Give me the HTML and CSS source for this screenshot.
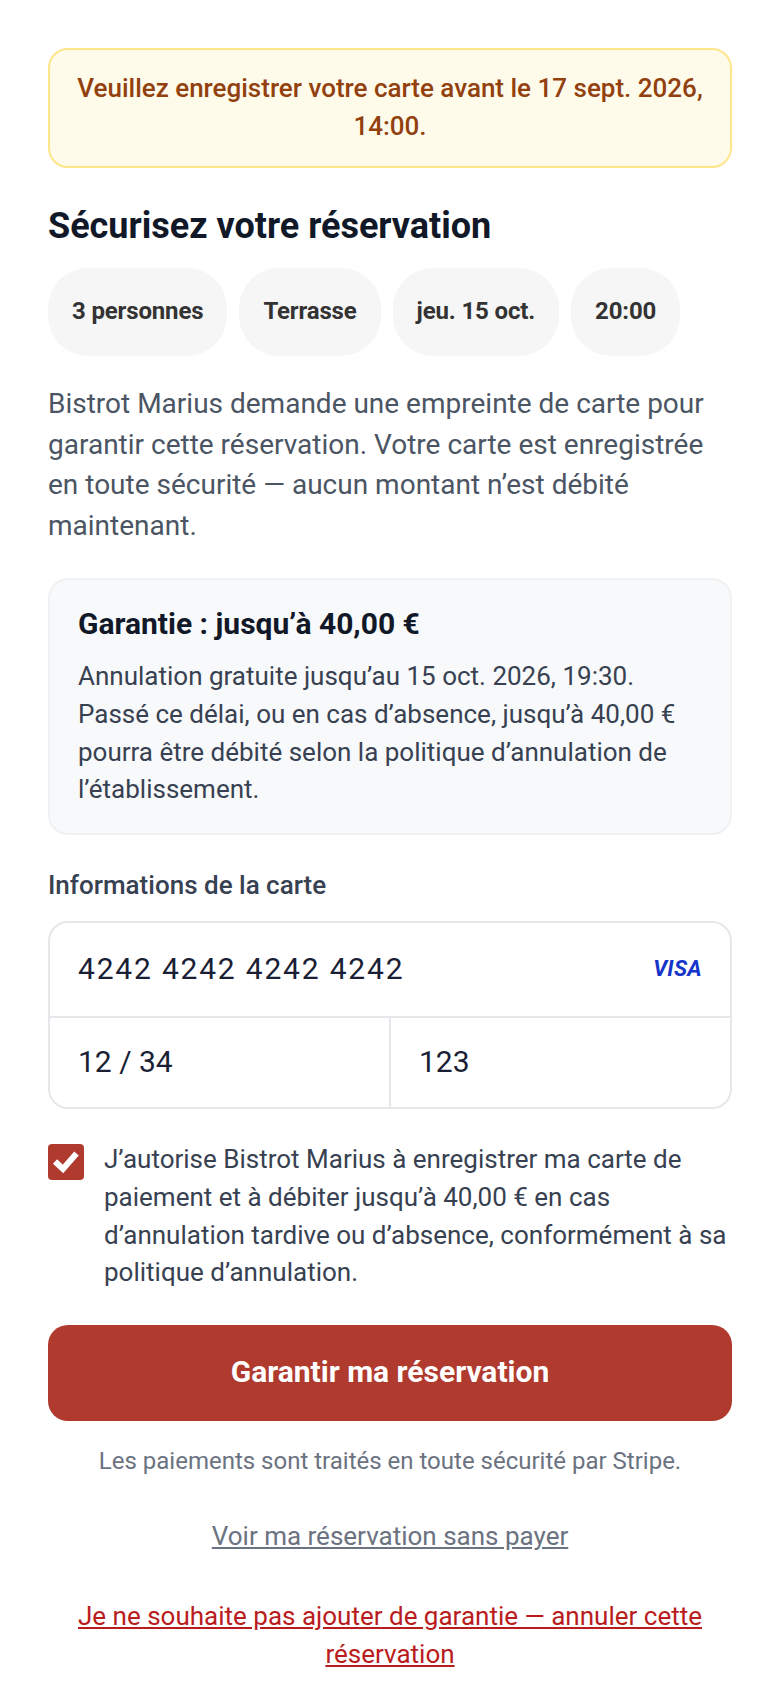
FILE: index.html
```html
<!DOCTYPE html>
<html lang="fr">
<head>
    <meta charset="UTF-8">
    <meta name="viewport" content="width=device-width, initial-scale=1.0">
    <title>Sécurisez votre réservation</title>
    <link rel="stylesheet" href="styles.css">
</head>
<body>
    <main class="page">
        <div class="notice">Veuillez enregistrer votre carte avant le 17 sept. 2026, 14:00.</div>

        <h1 class="title">Sécurisez votre réservation</h1>
        <ul class="pills">
            <li class="pill">3 personnes</li>
            <li class="pill">Terrasse</li>
            <li class="pill">jeu. 15 oct.</li>
            <li class="pill">20:00</li>
        </ul>
        <p class="intro">Bistrot Marius demande une empreinte de carte pour garantir cette réservation. Votre carte est enregistrée en toute sécurité — aucun montant n’est débité maintenant.</p>

        <section class="policy">
            <h2 class="policy-title">Garantie : jusqu’à 40,00 €</h2>
            <p class="policy-text">Annulation gratuite jusqu’au 15 oct. 2026, 19:30. Passé ce délai, ou en cas d’absence, jusqu’à 40,00 € pourra être débité selon la politique d’annulation de l’établissement.</p>
        </section>

        <form>
            <div class="card-label">Informations de la carte</div>
            <div class="card-box">
                <div class="card-number">
                    <span class="card-digits">4242 4242 4242 4242</span>
                    <span class="visa">VISA</span>
                </div>
                <div class="card-row">
                    <div class="card-cell">12 / 34</div>
                    <div class="card-cell">123</div>
                </div>
            </div>

            <div class="consent">
                <span class="checkbox">
                    <svg class="check" width="36" height="36" viewBox="0 0 36 36"><path d="M7 17.5 L15 25 L28.5 9.5" fill="none" stroke="#fff" stroke-width="6"/></svg>
                </span>
                <span class="consent-text">J’autorise Bistrot Marius à enregistrer ma carte de paiement et à débiter jusqu’à 40,00 € en cas d’annulation tardive ou d’absence, conformément à sa politique d’annulation.</span>
            </div>

            <button class="submit" type="button">Garantir ma réservation</button>
        </form>

        <p class="secure">Les paiements sont traités en toute sécurité par Stripe.</p>
        <p class="link-row"><a class="link-muted" href="#">Voir ma réservation sans payer</a></p>
        <p class="link-row"><a class="link-cancel" href="#">Je ne souhaite pas ajouter de garantie — annuler cette réservation</a></p>
    </main>
</body>
</html>
```

FILE: styles.css
```css
html, body {
    margin: 0;
    background: #fff;
}
.page {
    padding: 48px;
    font-family: Roboto, "Liberation Sans", sans-serif;
    color: #111827;
}

.notice {
    background: #fffbeb;
    border: 2px solid #fde68a;
    border-radius: 20px;
    padding: 19px 20px 21px;
    font-size: 26px;
    font-weight: 500;
    line-height: 38px;
    text-align: center;
    color: #92400e;
}

.title {
    margin: 35px 0 19px;
    font-size: 36px;
    font-weight: 700;
    line-height: 46px;
}

.pills {
    display: flex;
    flex-wrap: wrap;
    gap: 12px;
    margin: 0 0 28px;
    padding: 0;
    list-style: none;
}
.pill {
    padding: 23px 24px 25px;
    border-radius: 40px;
    background: #f6f6f6;
    font-size: 24px;
    font-weight: 700;
    line-height: 40px;
    letter-spacing: -0.15px;
    color: #333;
}

.intro {
    margin: 0 0 32px;
    font-size: 28px;
    line-height: 40.6px;
    color: #4b5563;
}

.policy {
    border: 2px solid #f0f1f3;
    border-radius: 20px;
    background: #f8f9fb;
    padding: 24px 28px;
    margin-bottom: 32px;
}
.policy-title {
    margin: 0 0 14px;
    font-size: 30px;
    font-weight: 700;
    line-height: 40px;
}
.policy-text {
    margin: 0;
    font-size: 26px;
    line-height: 37.7px;
    color: #374151;
}

.card-label {
    margin-bottom: 18px;
    font-size: 26px;
    font-weight: 500;
    line-height: 36px;
    color: #374151;
}
.card-box {
    border: 2px solid #e5e7eb;
    border-radius: 20px;
    font-size: 30px;
    color: #1a1f36;
}
.card-number {
    display: flex;
    justify-content: space-between;
    align-items: center;
    height: 90px;
    padding: 0 28px 3px;
    border-bottom: 2px solid #e5e7eb;
}
.card-digits {
    letter-spacing: 1.8px;
}
.visa {
    font-size: 22px;
    font-weight: 700;
    font-style: italic;
    letter-spacing: 0.3px;
    color: #1434cb;
}
.card-row {
    display: flex;
}
.card-cell {
    flex: 1;
    display: flex;
    align-items: center;
    height: 87px;
    padding: 0 28px 2px;
}
.card-cell + .card-cell {
    border-left: 2px solid #e5e7eb;
}

.consent {
    display: flex;
    gap: 20px;
    margin: 32px 0 33px;
}
.checkbox {
    flex: none;
    width: 36px;
    height: 36px;
    margin-top: 3px;
    border-radius: 4px;
    background: #b03a2e;
}
.check {
    display: block;
}
.consent-text {
    font-size: 26px;
    line-height: 37.7px;
    color: #374151;
}

.submit {
    display: block;
    width: 100%;
    height: 96px;
    padding: 0 0 4px;
    border: 0;
    border-radius: 20px;
    background: #b03a2e;
    color: #fff;
    font-family: inherit;
    font-size: 30px;
    font-weight: 700;
}

.secure {
    margin: 22px 0 38px;
    font-size: 24px;
    line-height: 36px;
    text-align: center;
    color: #6b7280;
}
.link-row {
    margin: 0 0 42px;
    font-size: 26px;
    line-height: 38px;
    text-align: center;
}
.link-muted {
    color: #6b7280;
}
.link-cancel {
    color: #b91c1c;
}
```
